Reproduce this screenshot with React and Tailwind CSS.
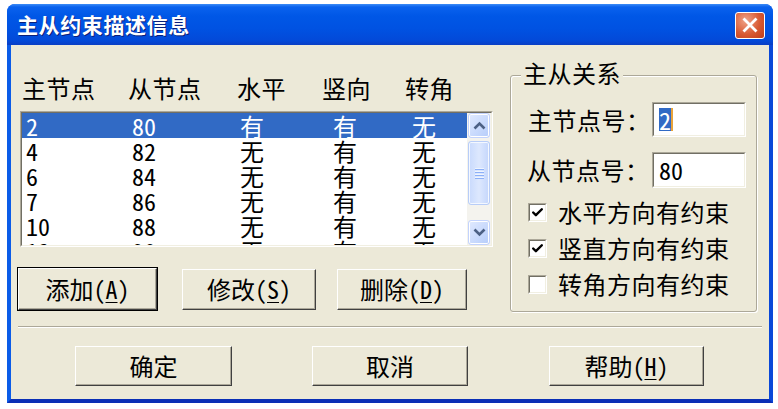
import { Check } from "lucide-react";

const rows = [
  ["2", "80", "有", "有", "无"],
  ["4", "82", "无", "有", "无"],
  ["6", "84", "无", "有", "无"],
  ["7", "86", "无", "有", "无"],
  ["10", "88", "无", "有", "无"],
  ["12", "90", "无", "有", "无"],
];

const Sunken = ({ className = "", children }) => (
  <div className={`border border-t-[#aca899] border-l-[#aca899] border-r-white border-b-white ${className}`}>
    <div className="h-full w-full border border-t-[#716f64] border-l-[#716f64] border-r-[#f1efe2] border-b-[#f1efe2] bg-white">
      {children}
    </div>
  </div>
);

const Btn = ({ children, className = "", isDefault }) => (
  <div className={`${isDefault ? "border border-black" : ""} ${className}`}>
    <button className="flex h-full w-full items-center justify-center border border-t-white border-l-white border-r-[#404040] border-b-[#404040] bg-[#ece9d8] text-[24px] font-light leading-none text-black shadow-[inset_-1px_-1px_0_#aca899]">
      {children}
    </button>
  </div>
);

const Key = ({ k }) => (
  <>
    (<span className="underline decoration-1 underline-offset-[3px]">{k}</span>)
  </>
);

const Arrow = ({ up }) => (
  <svg width="13" height="9" viewBox="0 0 13 9">
    <path d={up ? "M1.5 7.5 L6.5 2.5 L11.5 7.5" : "M1.5 1.5 L6.5 6.5 L11.5 1.5"} fill="none" stroke="#4d6185" strokeWidth="2.6" />
  </svg>
);

const ScrollBtn = ({ up }) => (
  <div className="flex h-[25px] w-full items-center justify-center rounded-[3px] border border-[#c3d3fd] bg-gradient-to-br from-[#e1eafe] to-[#b6cdfb] shadow-[inset_0_0_0_1px_#fff]">
    <Arrow up={up} />
  </div>
);

const CheckBox = ({ checked, label }) => (
  <div className="flex h-[36px] items-center">
    <div className="ml-[17px] h-[19px] w-[19px] border border-t-[#aca899] border-l-[#aca899] border-r-white border-b-white">
      <div className="flex h-full w-full items-center justify-center border border-t-[#716f64] border-l-[#716f64] border-r-[#f1efe2] border-b-[#f1efe2] bg-white">
        {checked && <Check size={13} strokeWidth={4.5} className="text-black" />}
      </div>
    </div>
    <span className="ml-[11px] text-[24px] leading-none tracking-[0.5px]">{label}</span>
  </div>
);

export default function App() {
  return (
    <div className="h-[409px] w-[778px] bg-white pl-[7px] pt-[4px] font-['Noto_Sans_Mono_CJK_SC','Noto_Sans_CJK_SC',sans-serif] font-light text-black">
      <div className="flex h-[399px] w-[766px] flex-col overflow-hidden rounded-t-[8px] bg-[#0a4fe0]">
        {/* title bar */}
        <div className="flex h-[41px] shrink-0 items-center justify-between bg-[linear-gradient(#3d8cf6_0px,#0a62ee_3px,#0057e6_12px,#0052e2_60%,#0349d8_90%,#0a3ec4_100%)] pl-[10px] pr-[8px]">
          <span className="font-['Noto_Sans_CJK_SC',sans-serif] text-[21px] font-bold leading-none tracking-[0.6px] text-white [text-shadow:1px_1px_0_#0a1f7a]">
            主从约束描述信息
          </span>
          <div className="mt-[1px] flex h-[27px] w-[30px] items-center justify-center rounded-[3px] border border-white bg-[radial-gradient(circle_at_35%_30%,#f0a48a,#d85a33_55%,#c03c18)]">
            <svg width="16" height="16" viewBox="0 0 16 16">
              <path d="M2.5 2.5 L13.5 13.5 M13.5 2.5 L2.5 13.5" stroke="white" strokeWidth="2.8" strokeLinecap="square" />
            </svg>
          </div>
        </div>

        {/* client area */}
        <div className="flex flex-1 flex-col border-x-4 border-b-4 border-l-[#0b5ce8] border-r-[#0a48d8] border-b-[#0a2fb5] bg-[#ece9d8]">
          <div className="flex">
            {/* left column */}
            <div className="ml-[6px] w-[476px]">
              <div className="mt-[29px] flex h-[28px] items-center pl-[5px] text-[24px] leading-none tracking-[0.5px]">
                <span className="w-[106px]">主节点</span>
                <span className="w-[109px]">从节点</span>
                <span className="w-[85px]">水平</span>
                <span className="w-[83px]">竖向</span>
                <span>转角</span>
              </div>

              <Sunken className="ml-[3px] mt-[9px] h-[136px] w-[473px]">
                <div className="flex h-full">
                  <div className="h-full flex-1 overflow-hidden">
                    {rows.map((r, i) => (
                      <div
                        key={i}
                        className={`flex h-[25px] items-center text-[24px] leading-none ${
                          i === 0 ? "bg-[#316ac5] text-white" : ""
                        }`}
                      >
                        <span className="w-[110px] pl-[4px]">{r[0]}</span>
                        <span className="w-[108px]">{r[1]}</span>
                        <span className="w-[93px]">{r[2]}</span>
                        <span className="w-[79px]">{r[3]}</span>
                        <span>{r[4]}</span>
                      </div>
                    ))}
                  </div>
                  <div className="flex h-full w-[24px] flex-col bg-[#f4f3ee] px-[1px]">
                    <ScrollBtn up />
                    <div className="mt-[3px] flex h-[64px] flex-col items-center justify-center gap-[2px] rounded-[3px] border border-[#b8cdf8] bg-gradient-to-r from-[#c9dafd] via-[#dde8fe] to-[#c4d6fc] shadow-[inset_0_0_0_1px_#f4f8ff]">
                      <div className="h-px w-[9px] bg-[#eef4fe] shadow-[0_1px_0_#8cb0f8]" />
                      <div className="h-px w-[9px] bg-[#eef4fe] shadow-[0_1px_0_#8cb0f8]" />
                      <div className="h-px w-[9px] bg-[#eef4fe] shadow-[0_1px_0_#8cb0f8]" />
                      <div className="h-px w-[9px] bg-[#eef4fe] shadow-[0_1px_0_#8cb0f8]" />
                    </div>
                    <div className="flex-1" />
                    <ScrollBtn />
                  </div>
                </div>
              </Sunken>

              <div className="mt-[20px] flex h-[44px] items-center">
                <Btn isDefault className="h-[44px] w-[141px]">
                  添加<Key k="A" />
                </Btn>
                <Btn className="ml-[24px] h-[41px] w-[134px]">
                  修改<Key k="S" />
                </Btn>
                <Btn className="ml-[21px] h-[41px] w-[130px]">
                  删除<Key k="D" />
                </Btn>
              </div>
            </div>

            {/* right group box */}
            <div className="relative ml-[17px] mt-[30px] h-[237px] w-[247px] rounded-[3px] border border-[#aca899] shadow-[inset_1px_1px_0_#fff,1px_1px_0_#fff]">
              <span className="absolute -top-[15px] left-[10px] bg-[#ece9d8] px-[2px] text-[24px] leading-none tracking-[0.5px]">
                主从关系
              </span>
              <div className="pt-[26px]">
                <div className="flex h-[35px] items-center">
                  <span className="w-[141px] pl-[17px] text-[24px] leading-none tracking-[0.5px]">主节点号：</span>
                  <Sunken className="h-[35px] w-[94px]">
                    <div className="flex h-full items-center pl-[5px]">
                      <span className="flex h-[23px] items-center bg-[#316ac5] text-[24px] leading-none text-white">2</span>
                      <span className="h-[23px] w-[2px] bg-[#e8a33a]" />
                    </div>
                  </Sunken>
                </div>
                <div className="mt-[15px] flex h-[36px] items-center">
                  <span className="w-[141px] pl-[16px] text-[24px] leading-none tracking-[0.5px]">从节点号：</span>
                  <Sunken className="h-[36px] w-[94px]">
                    <div className="flex h-full items-center pl-[5px] text-[24px] leading-none">80</div>
                  </Sunken>
                </div>
                <div className="mt-[6px]">
                  <CheckBox checked label="水平方向有约束" />
                  <CheckBox checked label="竖直方向有约束" />
                  <CheckBox label="转角方向有约束" />
                </div>
              </div>
            </div>
          </div>

          {/* separator */}
          <div className="ml-[7px] mt-[14px] h-[2px] w-[744px] border-t border-b border-t-[#aca899] border-b-white" />

          {/* bottom buttons */}
          <div className="ml-[64px] mt-[18px] flex">
            <Btn className="h-[40px] w-[157px]">确定</Btn>
            <Btn className="ml-[80px] h-[40px] w-[156px]">取消</Btn>
            <Btn className="ml-[81px] h-[40px] w-[155px]">
              帮助<Key k="H" />
            </Btn>
          </div>
        </div>
      </div>
    </div>
  );
}
